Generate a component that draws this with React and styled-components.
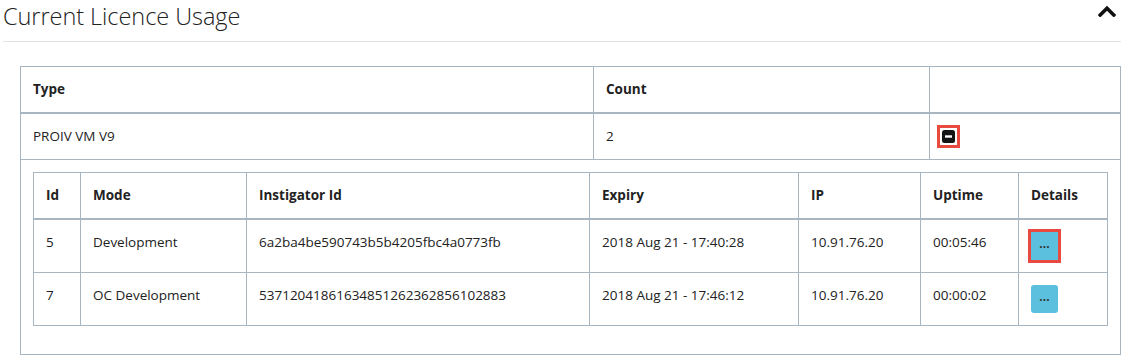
import React from "react";
import styled, { createGlobalStyle } from "styled-components";

const GlobalStyle = createGlobalStyle`
  html, body {
    margin: 0;
    padding: 0;
    background: #ffffff;
  }
  body {
    font-family: "Open Sans", "Noto Sans", Arial, sans-serif;
    color: #222;
  }
`;

const Page = styled.div`
  padding: 0 6px 0 3px;
`;

const Header = styled.div`
  display: flex;
  justify-content: space-between;
  align-items: flex-start;
  height: 41px;
  border-bottom: 1px solid #e2e2e2;
`;

const Title = styled.h2`
  margin: 0;
  padding-top: 1px;
  font-size: 23.5px;
  font-weight: 300;
  line-height: 30px;
  color: #222;
  letter-spacing: -0.05px;
`;

const CollapseIcon = styled.svg`
  margin-top: 4px;
  margin-right: 5px;
  width: 18px;
  height: 13px;
`;

const Body = styled.div`
  padding: 24px 0 0 17px;
`;

const Table = styled.table`
  width: 100%;
  border-collapse: collapse;
  table-layout: fixed;
  border: 1px solid #a8b6c1;
  font-size: 13.5px;
  line-height: 21px;
  margin-bottom: ${(p) => p.$mb || 0}px;
`;

const Th = styled.th`
  text-align: left;
  font-weight: 700;
  padding: 12px;
  border: 1px solid #a8b6c1;
  border-bottom-width: 2px;
  vertical-align: top;
`;

const Td = styled.td`
  text-align: left;
  padding: ${(p) => (p.$nested ? "12px 12px 0" : "12px")};
  border: 1px solid #a8b6c1;
  vertical-align: top;
  white-space: nowrap;
`;

const MinusBox = styled.span`
  display: inline-block;
  vertical-align: middle;
  width: 13px;
  height: 13px;
  margin-top: -2px;
  outline: ${(p) => (p.$highlight ? "3px solid #e84a3f" : "none")};
  outline-offset: 2px;
  line-height: 0;
`;

const DetailsButton = styled.button`
  display: inline-flex;
  vertical-align: top;
  align-items: center;
  justify-content: center;
  width: 27px;
  height: 28px;
  padding: 0 0 4px;
  border: none;
  border-radius: ${(p) => (p.$highlight ? 0 : 3)}px;
  background: #5bc0de;
  color: #333;
  font-family: inherit;
  font-size: 12px;
  font-weight: 700;
  line-height: 1;
  cursor: pointer;
  outline: ${(p) => (p.$highlight ? "3px solid #e84a3f" : "none")};
  outline-offset: 0;
`;

const rows = [
  {
    id: 5,
    mode: "Development",
    instigator: "6a2ba4be590743b5b4205fbc4a0773fb",
    expiry: "2018 Aug 21 - 17:40:28",
    ip: "10.91.76.20",
    uptime: "00:05:46",
    highlight: true,
  },
  {
    id: 7,
    mode: "OC Development",
    instigator: "53712041861634851262362856102883",
    expiry: "2018 Aug 21 - 17:46:12",
    ip: "10.91.76.20",
    uptime: "00:00:02",
    highlight: false,
  },
];

const innerCols = [47, 166, 343, 209, 122, 98, 89];

export default function App() {
  return (
    <>
      <GlobalStyle />
      <Page>
        <Header>
          <Title>Current Licence Usage</Title>
          <CollapseIcon viewBox="0 0 18 13" fill="none">
            <path
              d="M2.2 11 L9 4.2 L15.8 11"
              stroke="#111"
              strokeWidth="3.6"
              strokeLinecap="square"
              strokeLinejoin="miter"
            />
          </CollapseIcon>
        </Header>
        <Body>
          <Table>
            <colgroup>
              <col style={{ width: 573 }} />
              <col style={{ width: 336 }} />
              <col />
            </colgroup>
            <thead>
              <tr>
                <Th>Type</Th>
                <Th>Count</Th>
                <Th />
              </tr>
            </thead>
            <tbody>
              <tr>
                <Td>PROIV VM V9</Td>
                <Td>2</Td>
                <Td>
                  <MinusBox $highlight>
                    <svg width="13" height="13" viewBox="0 0 13 13">
                      <rect x="0" y="0" width="13" height="13" rx="2.5" fill="#151515" />
                      <rect x="3" y="5.3" width="7" height="2.4" fill="#ffffff" />
                    </svg>
                  </MinusBox>
                </Td>
              </tr>
              <tr>
                <Td colSpan={3} $nested>
                  <Table $mb={28}>
                    <colgroup>
                      {innerCols.map((w, i) => (
                        <col key={i} style={{ width: w }} />
                      ))}
                    </colgroup>
                    <thead>
                      <tr>
                        <Th>Id</Th>
                        <Th>Mode</Th>
                        <Th>Instigator Id</Th>
                        <Th>Expiry</Th>
                        <Th>IP</Th>
                        <Th>Uptime</Th>
                        <Th>Details</Th>
                      </tr>
                    </thead>
                    <tbody>
                      {rows.map((r) => (
                        <tr key={r.id}>
                          <Td>{r.id}</Td>
                          <Td>{r.mode}</Td>
                          <Td>{r.instigator}</Td>
                          <Td>{r.expiry}</Td>
                          <Td>{r.ip}</Td>
                          <Td>{r.uptime}</Td>
                          <Td>
                            <DetailsButton $highlight={r.highlight}>...</DetailsButton>
                          </Td>
                        </tr>
                      ))}
                    </tbody>
                  </Table>
                </Td>
              </tr>
            </tbody>
          </Table>
        </Body>
      </Page>
    </>
  );
}
